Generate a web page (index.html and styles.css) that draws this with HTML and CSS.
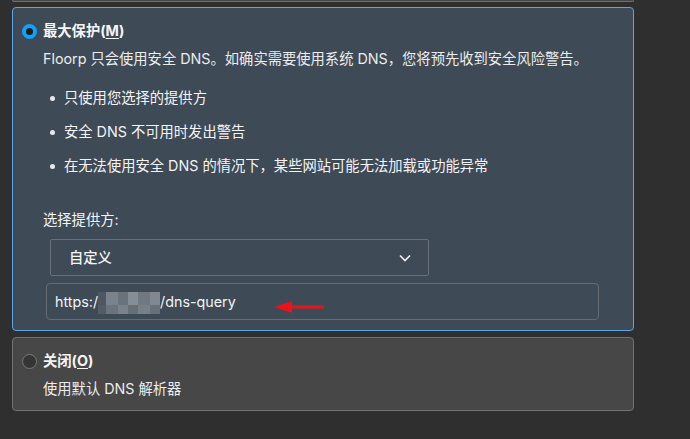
FILE: index.html
```html
<!DOCTYPE html>
<html lang="zh-CN">
<head>
<meta charset="utf-8">
<link rel="stylesheet" href="styles.css">
</head>
<body>
<div class="page">
  <div class="prev-edge"></div>
  <section class="card card-selected">
    <div class="head">
      <span class="radio radio-on"></span>
      <span class="title">最大保护(<u>M</u>)</span>
    </div>
    <div class="body">
      <p class="desc">Floorp 只会使用安全 DNS。如确实需要使用系统 DNS，您将预先收到安全风险警告。</p>
      <ul class="bullets">
        <li>只使用您选择的提供方</li>
        <li>安全 DNS 不可用时发出警告</li>
        <li>在无法使用安全 DNS 的情况下，某些网站可能无法加载或功能异常</li>
      </ul>
      <p class="label">选择提供方:</p>
      <div class="select">
        <span>自定义</span>
        <svg class="chev" width="12" height="8" viewBox="0 0 12 8"><path d="M1 1.5 L6 6.5 L11 1.5" fill="none" stroke="#f2f2f2" stroke-width="1.6"/></svg>
      </div>
      <div class="input">
        <span>https:/</span><span class="blur"></span><span>/dns-query</span>
        <svg class="arrow" width="52" height="14" viewBox="0 0 52 14"><path d="M16 7 H50" stroke="#e8141b" stroke-width="3"/><path d="M0 7 L18 1 L18 13 Z" fill="#e8141b"/></svg>
      </div>
    </div>
  </section>
  <section class="card card-plain">
    <div class="head">
      <span class="radio radio-off"></span>
      <span class="title">关闭(<u>O</u>)</span>
    </div>
    <div class="body">
      <p class="desc">使用默认 DNS 解析器</p>
    </div>
  </section>
</div>
</body>
</html>
```

FILE: styles.css
```css
* { box-sizing: border-box; }
html, body {
  margin: 0;
  padding: 0;
  background: #2f2f2f;
  height: 100%;
}
body {
  font-family: Inter, "Noto Sans CJK SC", sans-serif;
  font-size: 14.3px;
  line-height: 20px;
  color: #f4f4f6;
}
.page {
  width: 622px;
  margin-left: 12px;
  display: flex;
  flex-direction: column;
}
.prev-edge {
  height: 2px;
  background: #474747;
  border: 1px solid #707070;
  border-top: none;
  border-radius: 0 0 4px 4px;
}
.card {
  border-radius: 4px;
  padding: 13px 10px 10px 9px;
}
.card-selected {
  margin-top: 5px;
  height: 324px;
  background: #3e4a56;
  border: 1px solid #5ea5e6;
}
.card-plain {
  margin-top: 6px;
  height: 74px;
  background: #474747;
  border: 1px solid #727272;
  padding-bottom: 10px;
}
.head {
  display: flex;
  align-items: center;
  gap: 6px;
  height: 20px;
}
.radio {
  width: 15px;
  height: 15px;
  border-radius: 50%;
  flex: none;
}
.radio-on {
  background: #1d1d1f;
  border: 4px solid #12a1f5;
}
.radio-off {
  background: #353535;
  border: 1px solid #7a7a7a;
}
.title {
  font-weight: 700;
}
u {
  text-underline-offset: 2px;
}
.body {
  margin-left: 21px;
}
.desc {
  margin: 8px 0 0;
  color: #ececee;
}
.bullets {
  list-style: none;
  margin: 19px 0 0;
  padding: 0 0 0 21px;
  display: flex;
  flex-direction: column;
  gap: 14px;
}
.bullets li {
  position: relative;
}
.bullets li::before {
  content: "";
  position: absolute;
  left: -14px;
  top: 8px;
  width: 5px;
  height: 5px;
  border-radius: 50%;
  background: #e8e8ea;
}
.label {
  margin: 34px 0 0;
}
.select {
  margin: 9px 0 0 7px;
  width: 379px;
  height: 37px;
  border: 1px solid #6a6f75;
  border-radius: 2px;
  display: flex;
  align-items: center;
  justify-content: space-between;
  padding: 0 17px 0 18px;
  font-weight: 500;
}
.input {
  position: relative;
  margin: 7px 0 0 3px;
  width: 553px;
  height: 37px;
  border: 1px solid #646b73;
  border-radius: 4px;
  display: flex;
  align-items: center;
  padding: 0 8px;
  font-size: 14.3px;
}
.blur {
  display: inline-block;
  width: 62px;
  height: 22px;
  margin-top: 2px;
  background:
    linear-gradient(90deg, #4f5963 0 8px, #7e868e 8px 20px, #6d757e 20px 30px, #8a9198 30px 40px, #737b84 40px 52px, #858c93 52px 62px);
  opacity: 0.95;
  position: relative;
}
.blur::after {
  content: "";
  position: absolute;
  left: 0;
  right: 0;
  bottom: 0;
  height: 9px;
  background: linear-gradient(90deg, #535d67 0 8px, #6e767f 8px 20px, #7f868e 20px 30px, #69717a 30px 40px, #7b828a 40px 52px, #6a727b 52px 62px);
}
.arrow {
  position: absolute;
  left: 227px;
  top: 16px;
}
```
